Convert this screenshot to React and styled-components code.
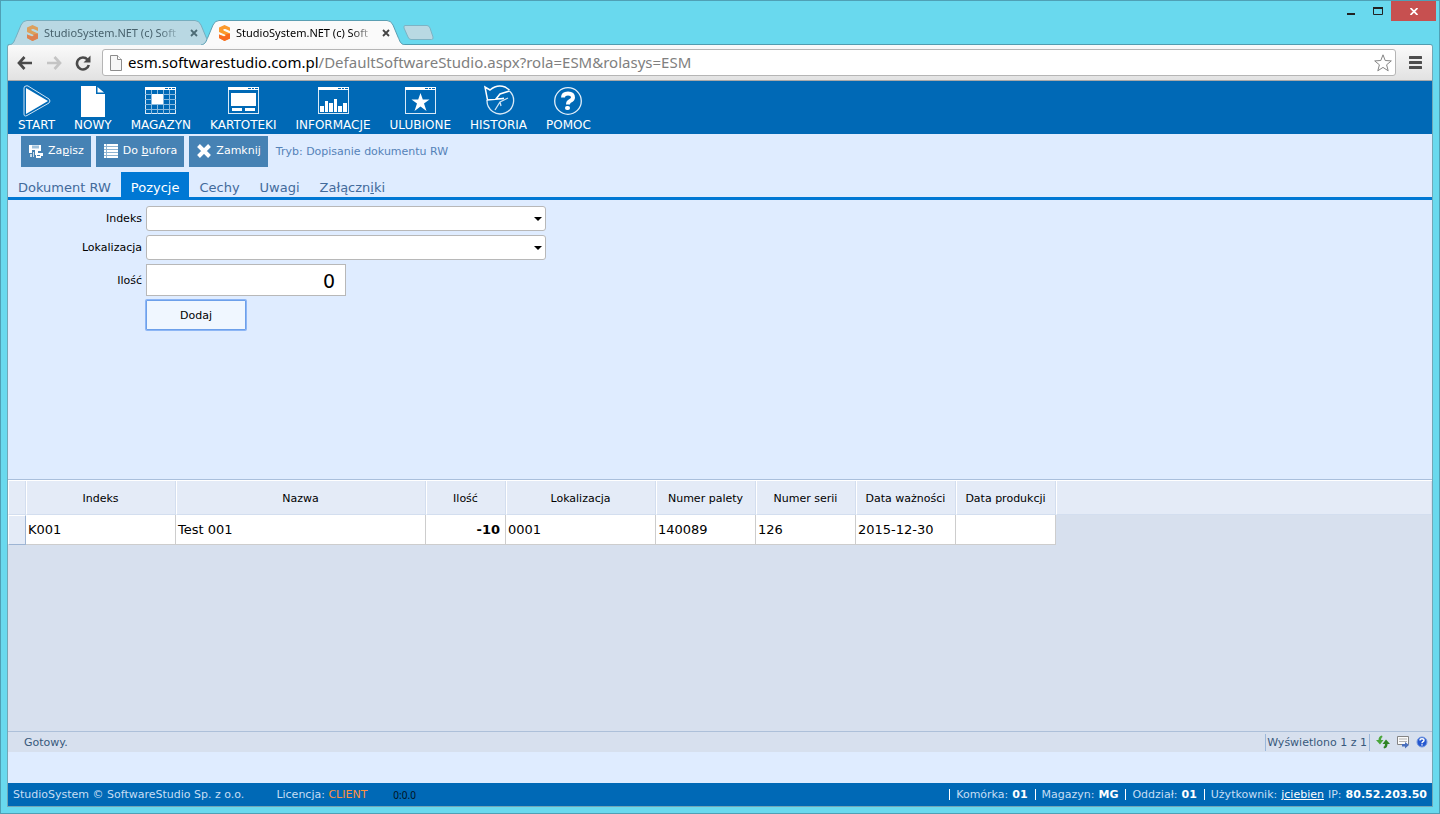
import { useState } from "react"
import styled, { createGlobalStyle } from "styled-components"

const menuItems = [
    { name: 'START', icon: StartIcon },
    { name: 'NOWY', icon: NewIcon },
    { name: 'MAGAZYN', icon: WarehouseIcon },
    { name: 'KARTOTEKI', icon: FilesIcon },
    { name: 'INFORMACJE', icon: InfoIcon },
    { name: 'ULUBIONE', icon: FavouritesIcon },
    { name: 'HISTORIA', icon: HistoryIcon },
    { name: 'POMOC', icon: HelpIcon }
]

const columns = [
    { name: 'Indeks', width: 150 },
    { name: 'Nazwa', width: 250 },
    { name: 'Ilość', width: 80, numeric: true },
    { name: 'Lokalizacja', width: 150 },
    { name: 'Numer palety', width: 100 },
    { name: 'Numer serii', width: 100 },
    { name: 'Data ważności', width: 100 },
    { name: 'Data produkcji', width: 100 }
]

const rows = [
    ['K001', 'Test 001', '-10', '0001', '140089', '126', '2015-12-30', '']
]

export default function App() {
    return (
        <>
            <GlobalStyle />
            <Window>
                <TitleBar>
                    <BrowserTabs>
                        <BrowserTab />
                        <BrowserTab active />
                        <NewTab aria-label="Nowa karta">
                            <svg width="32" height="17" viewBox="0 0 32 17">
                                <path d="M3 1.500H25Q27 1.500 28 4L31 13Q31.500 15.500 29.500 15.500H9Q7 15.500 6 13L2 4Q1.500 1.500 3 1.500Z" fill="#b9d9e3" stroke="#7db3c4" />
                            </svg>
                        </NewTab>
                    </BrowserTabs>
                    <WindowButtons />
                </TitleBar>
                <Frame>
                    <AddressBar />
                    <Page>
                        <MainMenu />
                        <Commands />
                        <DocumentTabs />
                        <PositionForm />
                        <PositionGrid />
                        <StatusBar />
                        <Footer />
                    </Page>
                </Frame>
            </Window>
        </>
    )
}

const BrowserTab = ({ active }) => {
    return (
        <StyledBrowserTab $active={active}>
            <TabShape viewBox="0 0 204 25" preserveAspectRatio="none">
                <path
                    d="M0 25C5 24 5 21 7 17L12 5Q14 0.500 18 0.500H186Q190 0.500 192 5L197 17C199 21 199 24 204 25"
                    fill={active ? '#fafafa' : '#b9d8e3'}
                    stroke={active ? '#5b9fb3' : '#76aebf'}
                />
            </TabShape>
            <TabContent>
                <LogoIcon faded={!active} />
                <TabTitle $active={active}>StudioSystem.NET (c) Soft</TabTitle>
                <CloseTab aria-label="Zamknij kartę">
                    <svg width="8" height="8" viewBox="0 0 8 8">
                        <path d="M1 1L7 7M7 1L1 7" stroke={active ? '#444' : '#4c6b75'} strokeWidth="1.800" />
                    </svg>
                </CloseTab>
            </TabContent>
        </StyledBrowserTab>
    )
}

const WindowButtons = () => {
    return (
        <WindowControls>
            <WindowButton aria-label="Minimalizuj">
                <svg width="8" height="10"><path d="M0 8H8" stroke="#222" strokeWidth="2" /></svg>
            </WindowButton>
            <WindowButton aria-label="Maksymalizuj">
                <svg width="10" height="8"><path d="M0.500 1V7.500H9.500V1" fill="none" stroke="#222" /><path d="M0 1H10" stroke="#222" strokeWidth="2" /></svg>
            </WindowButton>
            <WindowButton $close aria-label="Zamknij okno">
                <svg width="8" height="7" viewBox="0 0 8 7"><path d="M0.500 0L7.500 7M7.500 0L0.500 7" stroke="#fff" strokeWidth="1.700" /></svg>
            </WindowButton>
        </WindowControls>
    )
}

const AddressBar = () => {
    return (
        <StyledAddressBar>
            <Navigation>
                <NavButton aria-label="Wstecz">
                    <svg width="16" height="14" viewBox="0 0 16 14">
                        <path d="M7.500 1L2 7L7.500 13M2 7H15" fill="none" stroke="#4a4a4a" strokeWidth="2.700" />
                    </svg>
                </NavButton>
                <NavButton aria-label="Dalej" disabled>
                    <svg width="16" height="14" viewBox="0 0 16 14">
                        <path d="M8.500 1L14 7L8.500 13M14 7H1" fill="none" stroke="#c4c4c4" strokeWidth="2.700" />
                    </svg>
                </NavButton>
                <NavButton aria-label="Odśwież">
                    <svg width="16" height="16" viewBox="0 0 16 16">
                        <path d="M12.500 4.500A6 6 0 1 0 13.800 10" fill="none" stroke="#4a4a4a" strokeWidth="2.600" />
                        <path d="M15.500 0.500V7.500H8.500Z" fill="#4a4a4a" />
                    </svg>
                </NavButton>
            </Navigation>
            <UrlBox>
                <svg width="12" height="16" viewBox="0 0 12 16">
                    <path d="M0.500 0.500H7.500L11.500 4.500V15.500H0.500Z" fill="#f7f7f7" stroke="#8c8c8c" />
                    <path d="M7.500 0.500V4.500H11.500" fill="#fff" stroke="#8c8c8c" />
                </svg>
                <Url>
                    <b>esm.softwarestudio.com.pl</b>/DefaultSoftwareStudio.aspx?rola=ESM&amp;rolasys=ESM
                </Url>
                <svg width="18" height="18" viewBox="0 0 18 18">
                    <path d="M9 0.800L11.200 6.500L17.300 6.900L12.600 10.800L14.200 16.800L9 13.400L3.800 16.800L5.400 10.800L0.700 6.900L6.800 6.500Z" fill="#fff" stroke="#858585" strokeLinejoin="round" />
                </svg>
            </UrlBox>
            <NavButton aria-label="Menu">
                <svg width="13" height="13" viewBox="0 0 13 13">
                    <path d="M1 1.500H12M1 6.500H12M1 11.500H12" stroke="#4d4d4d" strokeWidth="3" strokeLinecap="round" />
                </svg>
            </NavButton>
        </StyledAddressBar>
    )
}

const MainMenu = () => {
    return (
        <StyledMainMenu>
            {menuItems.map(({ name, icon: Icon }) => (
                <MenuButton key={name}>
                    <Icon />
                    {name}
                </MenuButton>
            ))}
        </StyledMainMenu>
    )
}

const Commands = () => {
    return (
        <StyledCommands>
            <CommandButton>
                <svg width="14" height="14" viewBox="0 0 14 14">
                    <path d="M0 1H12V7H8V6H3V9H0Z" fill="#fff" />
                    <path d="M3 1.500H10V4.500H3Z" fill="#9fc0da" />
                    <path d="M6 6H9V9H14V12H12V14H7V11H6Z" fill="#fff" />
                    <path d="M1 10H3V13H1ZM4 8H5V13H4Z" fill="#c9dcea" />
                    <path d="M8 11.500H11" stroke="#4682b4" />
                </svg>
                <span>Za<u>p</u>isz</span>
            </CommandButton>
            <CommandButton>
                <svg width="14" height="14" viewBox="0 0 14 14">
                    <rect width="14" height="14" fill="#8fb4d2" />
                    <path d="M0 1H14M0 4H14M0 7H14M0 10H14M0 13H14" stroke="#fff" strokeWidth="2" />
                    <path d="M2.500 0V14" stroke="#8fb4d2" />
                </svg>
                <span>Do <u>b</u>ufora</span>
            </CommandButton>
            <CommandButton>
                <svg width="14" height="14" viewBox="0 0 14 14">
                    <path d="M1.500 1.500L12.500 12.500M12.500 1.500L1.500 12.500" stroke="#fff" strokeWidth="4" />
                </svg>
                <span>Zamkni<u>j</u></span>
            </CommandButton>
            <Mode>Tryb: Dopisanie dokumentu RW</Mode>
        </StyledCommands>
    )
}

const DocumentTabs = () => {
    const [selected, setSelected] = useState('Pozycje')

    return (
        <StyledDocumentTabs>
            {['Dokument RW', 'Pozycje', 'Cechy', 'Uwagi'].map(tab => (
                <DocumentTab key={tab} $active={tab === selected} onClick={() => setSelected(tab)}>
                    {tab}
                </DocumentTab>
            ))}
            <DocumentTab $active={selected === 'Załączniki'} onClick={() => setSelected('Załączniki')}>
                Załączn<u>i</u>ki
            </DocumentTab>
        </StyledDocumentTabs>
    )
}

const PositionForm = () => {
    return (
        <Form onSubmit={event => event.preventDefault()}>
            <label htmlFor="indeks">Indeks</label>
            <SelectBox><select id="indeks" /></SelectBox>
            <label htmlFor="lokalizacja">Lokalizacja</label>
            <SelectBox><select id="lokalizacja" /></SelectBox>
            <label htmlFor="ilosc">Ilość</label>
            <QuantityInput id="ilosc" defaultValue="0" />
            <AddButton>Dodaj</AddButton>
        </Form>
    )
}

const PositionGrid = () => {
    return (
        <GridArea>
            <Table>
                <colgroup>
                    <Column $width={18} />
                    {columns.map(column => <Column key={column.name} $width={column.width} />)}
                    <col />
                </colgroup>
                <thead>
                    <tr>
                        <th />
                        {columns.map(column => <th key={column.name}>{column.name}</th>)}
                        <th />
                    </tr>
                </thead>
                <tbody>
                    {rows.map(row => (
                        <tr key={row[0]}>
                            <RowSelector />
                            {row.map((value, index) => (
                                <Cell key={columns[index].name} $numeric={columns[index].numeric}>{value}</Cell>
                            ))}
                        </tr>
                    ))}
                </tbody>
            </Table>
        </GridArea>
    )
}

const StatusBar = () => {
    return (
        <StyledStatusBar>
            <span>Gotowy.</span>
            <Displayed>Wyświetlono 1 z 1</Displayed>
            <StatusButton aria-label="Odśwież dane">
                <svg width="14" height="14" viewBox="0 0 14 14">
                    <path d="M6 0.500Q2.500 1 2.500 5H0L4 9.500L7.500 5H5Q5 2.500 6.500 2Z" fill="#4aa63a" />
                    <path d="M8 13.500Q11.500 13 11.500 9H14L10 4.500L6.500 9H9Q9 11.500 7.500 12Z" fill="#2f8424" />
                </svg>
            </StatusButton>
            <StatusButton aria-label="Eksport">
                <svg width="14" height="14" viewBox="0 0 14 14">
                    <path d="M1.500 1.500H12.500V9.500H1.500Z" fill="#fafafa" stroke="#848484" />
                    <path d="M3 4H11M3 6.500H11" stroke="#b2b2b2" />
                    <path d="M6 9H9V7L13 10L9 13.500V11.500H6Z" fill="#4b70bd" />
                </svg>
            </StatusButton>
            <StatusButton aria-label="Pomoc">
                <svg width="12" height="12" viewBox="0 0 12 12">
                    <circle cx="6" cy="6" r="5" fill="#2457cf" stroke="#7599e0" />
                    <path d="M4 4.500Q4 2.800 6 2.800Q8 2.800 8 4.300Q8 5.400 6.500 6Q6 6.400 6 7.200M6 8.300V9.600" fill="none" stroke="#fff" strokeWidth="1.400" />
                </svg>
            </StatusButton>
        </StyledStatusBar>
    )
}

const Footer = () => {
    return (
        <StyledFooter>
            <span>StudioSystem © SoftwareStudio Sp. z o.o.</span>
            <License>Licencja: <em>CLIENT</em></License>
            <Timer>0:0.0</Timer>
            <Session>
                <SessionItem>Komórka: <b>01</b></SessionItem>
                <SessionItem>Magazyn: <b>MG</b></SessionItem>
                <SessionItem>Oddział: <b>01</b></SessionItem>
                <SessionItem>Użytkownik: <a href="#user">jciebien</a> IP: <b>80.52.203.50</b></SessionItem>
            </Session>
        </StyledFooter>
    )
}

function LogoIcon({ faded }) {
    return (
        <svg width="13" height="16" viewBox="0 0 13 16">
            <path d="M12 4.500V2.500L6.500 0L1 2.500V7L7.500 10V11.500L5.500 11L1 9.500V13L6.500 16L12 13.500V8.500L5.500 5.500V4L7.500 4L12 6Z" fill={faded ? '#dca05c' : '#fb9a2c'} />
            <path d="M1 9.500L5.500 11.500L7.500 11V9.500L12 8.500V13.500L6.500 16L1 13Z" fill={faded ? '#dd8151' : '#f96a21'} />
        </svg>
    )
}

function StartIcon() {
    return (
        <svg width="30" height="32" viewBox="0 0 30 32">
            <path d="M4 1Q2 1 2 3V29Q2 32 5 30.500L27 18Q29 16 27 14L6 1Q5 0.500 4 1Z" fill="none" stroke="#cfe4f4" />
            <path d="M4 3V29L26 16Z" fill="#fff" />
        </svg>
    )
}

function NewIcon() {
    return (
        <svg width="30" height="32" viewBox="0 0 30 32">
            <path d="M3 1H18V9H27V32H3Z" fill="#fff" />
            <path d="M19.500 2V7.500H26Z" fill="#fff" />
        </svg>
    )
}

function WindowOutline() {
    return (
        <>
            <rect x="0.500" y="2.500" width="30" height="26" fill="none" stroke="#d9eaf7" />
            <path d="M0 3.500H31" stroke="#fff" strokeWidth="3" />
            <path d="M20 3.500H23M24 3.500H26M27 3.500H30" stroke="#0069b6" />
        </>
    )
}

function WarehouseIcon() {
    return (
        <svg width="31" height="32" viewBox="0 0 31 32">
            <WindowOutline />
            <path d="M6.500 5V29M12.500 5V29M18.500 5V29M24.500 5V29M0 9.500H31M0 14.500H31M0 19.500H31M0 24.500H31" stroke="#8abbe0" />
            <rect x="7" y="9" width="11" height="10" fill="#fff" />
        </svg>
    )
}

function FilesIcon() {
    return (
        <svg width="31" height="32" viewBox="0 0 31 32">
            <WindowOutline />
            <path d="M3 8H28V21H3ZM4 23H14V26H4ZM17 23H27V26H17Z" fill="#fff" />
        </svg>
    )
}

function InfoIcon() {
    return (
        <svg width="31" height="32" viewBox="0 0 31 32">
            <WindowOutline />
            <path d="M2 21H6V27H2ZM7 16H10V27H7ZM11 18H15V27H11ZM16 14H19V27H16ZM20 21H24V27H20ZM25 18H29V27H25Z" fill="#fff" />
        </svg>
    )
}

function FavouritesIcon() {
    return (
        <svg width="31" height="32" viewBox="0 0 31 32">
            <WindowOutline />
            <path d="M15.500 8L17.800 14.500H24.500L19 18.500L21.500 26L15.500 21.500L9.500 26L12 18.500L6.500 14.500H13.200Z" fill="#fff" />
        </svg>
    )
}

function HistoryIcon() {
    return (
        <svg width="32" height="32" viewBox="0 0 32 32">
            <path d="M4 15A13.300 13.300 0 1 0 26.500 6" fill="none" stroke="#d9eaf7" strokeWidth="1.300" />
            <path d="M26.500 6L17 9L13 14L21 13.500L4.500 15L2 2L7 5Q14 -1 22 2L26.500 5" fill="none" stroke="#fff" strokeWidth="1.500" />
            <path d="M25 13L17 17L12 25M17 17L18 21" fill="none" stroke="#cfe4f4" strokeWidth="1.300" />
        </svg>
    )
}

function HelpIcon() {
    return (
        <svg width="30" height="32" viewBox="0 0 30 32">
            <circle cx="15" cy="16" r="13.300" fill="none" stroke="#e4f0fa" strokeWidth="1.300" />
            <path d="M10 12.500Q10 8.500 15 8.500Q20 8.500 20 12.500Q20 14.500 17 16Q15 17 15 19.500" fill="none" stroke="#fff" strokeWidth="4" />
            <rect x="12" y="21" width="5" height="4" rx="2" fill="#fff" />
        </svg>
    )
}

const GlobalStyle = createGlobalStyle`
    * {
        box-sizing: border-box;
    }

    body {
        margin: 0;
        font-family: Verdana, "DejaVu Sans", sans-serif;
        font-size: 11px;
        color: #000;
    }

    button, input, select {
        font: inherit;
    }

    button {
        border: 0;
        padding: 0;
        background: none;
    }

    svg {
        display: block;
        flex-shrink: 0;
    }
`

const Window = styled.div`
    display: flex;
    flex-direction: column;
    min-height: 100vh;
    padding: 0 6px 6px;
    border: 1px solid #4fa0b5;
    background: #69d9ee;
`

const TitleBar = styled.header`
    display: flex;
    justify-content: space-between;
    height: 43px;
`

const BrowserTabs = styled.div`
    display: flex;
    align-items: flex-end;
    padding-left: 2px;
`

const StyledBrowserTab = styled.div`
    position: relative;
    width: 204px;
    height: 25px;
    margin-right: -12px;
    margin-bottom: -1px;
    z-index: ${props => props.$active ? 1 : 0};
`

const TabShape = styled.svg`
    position: absolute;
    inset: 0;
    width: 100%;
    height: 100%;
`

const TabContent = styled.div`
    position: relative;
    display: flex;
    align-items: center;
    height: 25px;
    padding: 0 12px 0 17px;
`

const TabTitle = styled.span`
    width: 140px;
    margin: 0 6px 0 5px;
    white-space: nowrap;
    font-family: "Segoe UI", "Noto Sans", sans-serif;
    font-size: 11px;
    color: ${props => props.$active ? '#000' : '#48626d'};
    mask-image: linear-gradient(to right, #000 115px, transparent);
`

const CloseTab = styled.button`
    display: flex;
`

const NewTab = styled.button`
    margin: 0 0 3px 9px;
`

const WindowControls = styled.div`
    display: flex;
    align-items: flex-start;
    margin-right: -3px;
`

const WindowButton = styled.button`
    display: flex;
    align-items: center;
    justify-content: center;
    width: ${props => props.$close ? 45 : 27}px;
    height: 20px;
    background: ${props => props.$close ? '#c75050' : 'none'};
`

const Frame = styled.div`
    display: flex;
    flex-direction: column;
    flex: 1;
    border: 1px solid #72a7b5;
    border-top-color: #519caf;
    border-radius: 3px 3px 0 0;
    background: #f0f0f0;
`

const StyledAddressBar = styled.div`
    display: flex;
    align-items: center;
    gap: 11px;
    height: 36px;
    padding: 0 9px;
    border-bottom: 1px solid #a9a9a9;
    border-radius: 3px 3px 0 0;
    background: linear-gradient(#fafafa, #e2e2e2);
`

const Navigation = styled.div`
    display: flex;
    align-items: center;
    gap: 13px;
`

const NavButton = styled.button`
    display: flex;
    justify-content: center;
    width: 16px;
`

const UrlBox = styled.div`
    display: flex;
    align-items: center;
    flex: 1;
    gap: 6px;
    height: 27px;
    padding: 0 3px 0 7px;
    border: 1px solid #b5b5b5;
    border-radius: 3px;
    background: #fff;
`

const Url = styled.span`
    flex: 1;
    padding-bottom: 2px;
    font-family: "Segoe UI", "Noto Sans", sans-serif;
    font-size: 15px;
    color: #808080;

    b {
        font-weight: 400;
        color: #000;
    }
`

const Page = styled.main`
    display: flex;
    flex-direction: column;
    flex: 1;
    background: #dfecff;
`

const StyledMainMenu = styled.nav`
    display: flex;
    gap: 19px;
    height: 53px;
    padding: 4px 10px 0;
    background: #0069b6;
`

const MenuButton = styled.button`
    display: flex;
    flex-direction: column;
    align-items: center;
    font-size: 12px;
    line-height: 16px;
    color: #fff;
`

const StyledCommands = styled.div`
    display: flex;
    gap: 5px;
    height: 38px;
    padding: 2px 13px 0;
`

const CommandButton = styled.button`
    display: flex;
    align-items: center;
    gap: 5px;
    height: 31px;
    padding: 0 7px 2px 8px;
    background: #4682b4;
    color: #fff;
`

const Mode = styled.span`
    padding-left: 3px;
    line-height: 32px;
    color: #5582b8;
`

const StyledDocumentTabs = styled.nav`
    display: flex;
    height: 28px;
    border-bottom: 3px solid #0078d4;
`

const DocumentTab = styled.button`
    padding: 6px 10px 0;
    font-size: 13px;
    background: ${props => props.$active ? '#0078d4' : 'none'};
    color: ${props => props.$active ? '#fff' : '#426a9b'};
`

const Form = styled.form`
    display: grid;
    grid-template-columns: 134px 400px;
    align-content: start;
    column-gap: 4px;
    row-gap: 4px;
    height: 279px;
    padding-top: 6px;

    label {
        align-self: center;
        text-align: right;
    }
`

const SelectBox = styled.div`
    position: relative;

    select {
        display: block;
        width: 100%;
        height: 25px;
        border: 1px solid #b8b8b8;
        border-radius: 3px;
        background: #fff;
        appearance: none;
    }

    &::after {
        content: '';
        position: absolute;
        top: 11px;
        right: 4px;
        border: 4px solid transparent;
        border-top-color: #000;
        pointer-events: none;
    }
`

const QuantityInput = styled.input`
    width: 200px;
    height: 32px;
    padding: 2px 10px 0;
    border: 1px solid #b8b8b8;
    background: #fff;
    font-size: 19px;
    text-align: right;
`

const AddButton = styled.button`
    grid-column: 2;
    width: 100px;
    height: 30px;
    border: 1px solid #6da0ea;
    border-radius: 1px;
    background: #f0f7ff;
    box-shadow: 0 0 0 1px #8db6f5;
`

const GridArea = styled.section`
    flex: 1;
    border-top: 1px solid #a9bfdc;
    background: #d7e0ee;
`

const Table = styled.table`
    width: 100%;
    table-layout: fixed;
    border-collapse: separate;
    border-spacing: 0;

    th {
        height: 35px;
        padding: 1px 2px 0 0;
        border-top: 1px solid #fff;
        border-left: 1px solid #fff;
        border-bottom: 1px solid #d3deef;
        background: #e4ebf7;
        font-weight: 400;
        white-space: nowrap;
        box-shadow: inset -1px 0 #d3deef;
    }
`

const Column = styled.col`
    width: ${props => props.$width}px;
`

const Cell = styled.td`
    height: 30px;
    padding: 0 ${props => props.$numeric ? 5 : 2}px;
    border-right: 1px solid #cdcdcd;
    border-bottom: 1px solid #cdcdcd;
    background: #fff;
    font-size: 13px;
    font-weight: ${props => props.$numeric ? 700 : 400};
    text-align: ${props => props.$numeric ? 'right' : 'left'};
`

const RowSelector = styled.td`
    border: 1px solid #9db4d3;
    border-top-color: #fff;
    border-left-color: #fff;
    background: #e4ebf7;
`

const StyledStatusBar = styled.div`
    display: flex;
    align-items: center;
    gap: 6px;
    height: 21px;
    margin-bottom: 31px;
    padding: 0 4px 0 16px;
    border-top: 1px solid #adc0d9;
    background: #d7e0ee;
    color: #38597c;
`

const Displayed = styled.span`
    margin-left: auto;
    padding: 0 2px 0 1px;
    border-left: 1px solid #9cb8da;
    border-right: 1px solid #9cb8da;
    line-height: 17px;
`

const StatusButton = styled.button`
    display: flex;
`

const StyledFooter = styled.footer`
    display: flex;
    align-items: center;
    height: 23px;
    padding: 0 5px;
    background: #0069b6;
    color: #c6def4;
`

const License = styled.span`
    margin: 0 26px 0 32px;

    em {
        font-style: normal;
        color: #ff9040;
    }
`

const Timer = styled.span`
    font-family: Tahoma, "Noto Sans", sans-serif;
    font-size: 10px;
    color: #001322;
`

const Session = styled.div`
    display: flex;
    gap: 7px;
    margin-left: auto;
`

const SessionItem = styled.span`
    display: flex;
    gap: 4px;
    align-items: center;

    &::before {
        content: '';
        width: 1px;
        height: 11px;
        margin-right: 2px;
        background: #fff;
    }

    b, a {
        color: #fff;
    }
`
